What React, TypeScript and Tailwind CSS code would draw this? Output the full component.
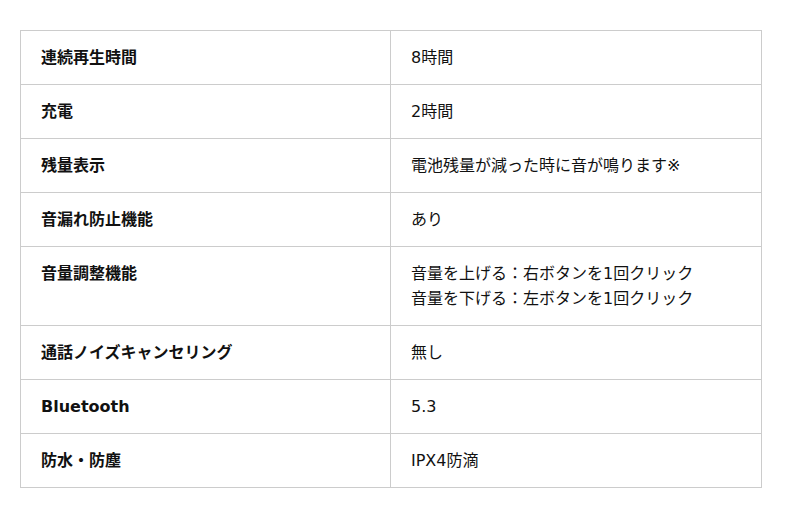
const rows: { label: string; value: string[] }[] = [
  { label: "連続再生時間", value: ["8時間"] },
  { label: "充電", value: ["2時間"] },
  { label: "残量表示", value: ["電池残量が減った時に音が鳴ります※"] },
  { label: "音漏れ防止機能", value: ["あり"] },
  {
    label: "音量調整機能",
    value: ["音量を上げる：右ボタンを1回クリック", "音量を下げる：左ボタンを1回クリック"],
  },
  { label: "通話ノイズキャンセリング", value: ["無し"] },
  { label: "Bluetooth", value: ["5.3"] },
  { label: "防水・防塵", value: ["IPX4防滴"] },
];

export default function App() {
  return (
    <div className="min-h-[518px] w-[800px] bg-white pt-[30px] pl-[20px] font-['DejaVu_Sans','Noto_Sans_CJK_JP',sans-serif] text-[16px] leading-[25px] text-[#111]">
      <table className="w-[742px] table-fixed border-collapse">
        <tbody>
          {rows.map((row) => (
            <tr key={row.label}>
              <th className="w-[370px] border border-[#cccccc] px-[20px] py-[14px] text-left align-top font-bold">
                {row.label}
              </th>
              <td className="border border-[#cccccc] px-[20px] py-[14px] align-top">
                {row.value.map((line) => (
                  <div key={line}>{line}</div>
                ))}
              </td>
            </tr>
          ))}
        </tbody>
      </table>
    </div>
  );
}
